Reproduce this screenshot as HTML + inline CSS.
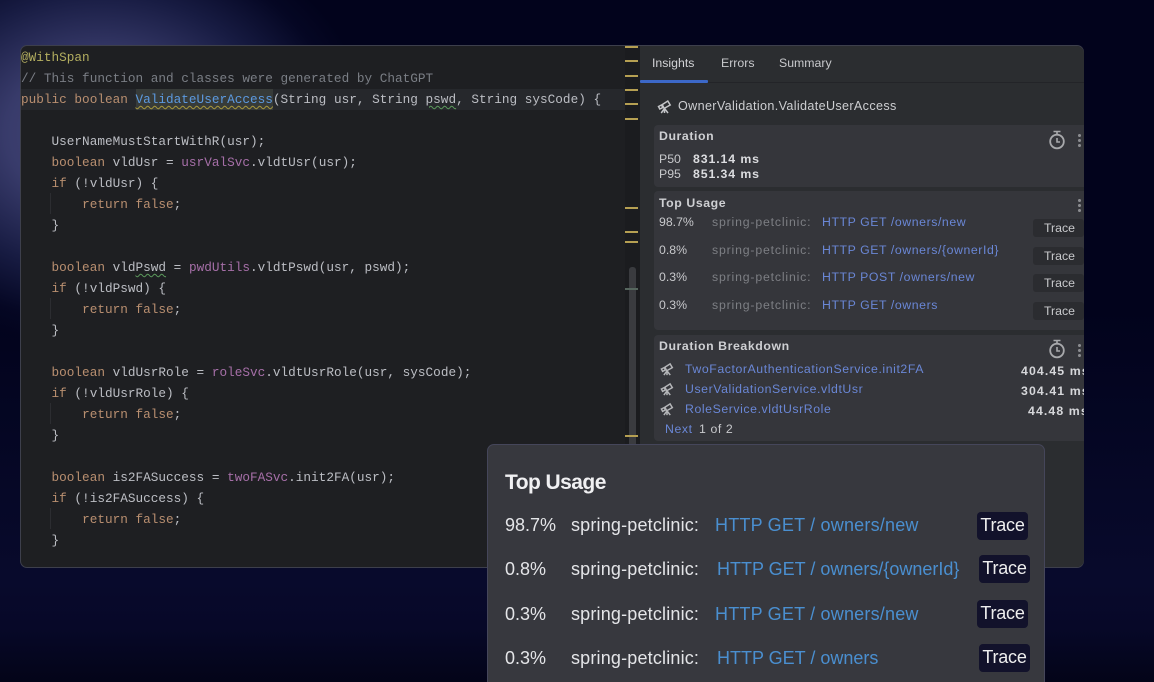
<!DOCTYPE html>
<html><head><meta charset="utf-8"><style>
html,body{margin:0;padding:0;width:1154px;height:682px;overflow:hidden;background:#02031a}
#root{position:absolute;left:0;top:0;width:1154px;height:682px;overflow:hidden}
#all{position:absolute;left:0;top:0;width:1154px;height:682px;overflow:hidden;filter:blur(.3px)}
#bg{position:absolute;left:0;top:0;width:1154px;height:682px;overflow:hidden;background:
radial-gradient(ellipse 270px 215px at 100px 133px,rgba(72,74,125,1) 0%,rgba(62,65,115,.9) 35%,rgba(38,44,92,.6) 65%,rgba(14,18,58,.25) 88%,rgba(5,7,38,0) 100%),
linear-gradient(180deg,#02031c 0%,#02031c 45%,#080a2c 85%,#070828 92%,#030418 100%)}
.t{position:absolute;white-space:pre;line-height:1}
#win{position:absolute;left:20px;top:45px;width:1064px;height:523px;border:1px solid #3d3f4c;border-radius:7px;overflow:hidden;background:#1e1f22;box-sizing:border-box}
#code{position:absolute;left:21px;top:0;font:12.72px/21px "Liberation Mono",monospace;color:#bcbec4;font-weight:400}
.cl{position:absolute;left:0;white-space:pre;height:21px;line-height:21px}
.k{color:#b98f70}.p{color:#a66fa8}.a{color:#b3ae60}.c{color:#7a7e85}.m{color:#56a8f5}
.mk{position:absolute;left:625px;width:13px;height:2px;background:#b59f52}
.s{font-family:"Liberation Sans",sans-serif;font-size:12.3px;color:#c8c9cc}
.b{font-weight:700;color:#cfd0d3;letter-spacing:.58px}
.g{color:#7d7f84;letter-spacing:.82px}.l{color:#6a87d6;letter-spacing:.57px}
.card{position:absolute;left:654px;width:430px;background:#35363b;border-radius:4px 0 0 4px}
.tr{position:absolute;left:1033px;width:51px;height:18px;background:#2b2c30;border-radius:3px;font:12.3px/18px "Liberation Sans",sans-serif;color:#c8c9cc;text-indent:11px}
.dots{position:absolute;left:1078px;width:3px;height:13px;background:radial-gradient(circle at 1.5px 1.5px,#8b8c90 1.4px,transparent 1.6px) 0 0/3px 5px}
#pop{position:absolute;left:487px;top:444px;width:558px;height:260px;background:#37383e;border:1.5px solid #45465a;border-radius:7px;box-sizing:border-box}
.q{font-family:"Liberation Sans",sans-serif;font-size:18px;color:#e4e5e8}
.sp{letter-spacing:.18px}
.u{color:#4a8fd0}
.btn{position:absolute;height:28px;background:#12122b;border-radius:4px;font:18px/27px "Liberation Sans",sans-serif;color:#eeeeee;text-align:center;letter-spacing:-.2px}
</style></head><body>
<div id="root"><div id="all">
<div id="bg"></div>
<div id="win"></div>
<div style="position:absolute;left:21px;top:89px;width:604px;height:21px;background:#26282c"></div>
<div style="position:absolute;left:136px;top:89px;width:137px;height:21px;background:#373b39"></div>
<div style="position:absolute;left:625px;top:46px;width:15px;height:521px;background:#1b1c1f"></div>
<div style="position:absolute;left:640px;top:46px;width:444px;height:521px;background:#2b2d30;border-radius:0 7px 7px 0"></div>
<div style="position:absolute;left:640px;top:82px;width:444px;height:1px;background:#232428"></div>
<div style="position:absolute;left:640px;top:80px;width:68px;height:3px;background:#3c68c8;border-radius:1px"></div>
<div style="position:absolute;left:629px;top:267px;width:7px;height:300px;background:#3a3b3f;border-radius:3px 3px 0 0"></div>

<div id="code">
<div class="cl" style="top:47px"><span class="a">@WithSpan</span></div>
<div class="cl" style="top:68px"><span class="c">// This function and classes were generated by ChatGPT</span></div>
<div class="cl" style="top:89px"><span class="k">public boolean </span><span class="m" style="color:#5c9ae0;text-decoration:underline wavy #a8983c 1px;text-underline-offset:2px">ValidateUserAccess</span>(String usr, String <span style="text-decoration:underline wavy #5c9a5c 1px;text-underline-offset:2px">pswd</span>, String sysCode) {</div>
<div class="cl" style="top:131px">    UserNameMustStartWithR(usr);</div>
<div class="cl" style="top:152px">    <span class="k">boolean</span> vldUsr = <span class="p">usrValSvc</span>.vldtUsr(usr);</div>
<div class="cl" style="top:173px">    <span class="k">if</span> (!vldUsr) {</div>
<div class="cl" style="top:194px">        <span class="k">return false</span>;</div>
<div class="cl" style="top:215px">    }</div>
<div class="cl" style="top:257px">    <span class="k">boolean</span> vld<span style="text-decoration:underline wavy #5c9a5c 1px;text-underline-offset:2px">Pswd</span> = <span class="p">pwdUtils</span>.vldtPswd(usr, pswd);</div>
<div class="cl" style="top:278px">    <span class="k">if</span> (!vldPswd) {</div>
<div class="cl" style="top:299px">        <span class="k">return false</span>;</div>
<div class="cl" style="top:320px">    }</div>
<div class="cl" style="top:362px">    <span class="k">boolean</span> vldUsrRole = <span class="p">roleSvc</span>.vldtUsrRole(usr, sysCode);</div>
<div class="cl" style="top:383px">    <span class="k">if</span> (!vldUsrRole) {</div>
<div class="cl" style="top:404px">        <span class="k">return false</span>;</div>
<div class="cl" style="top:425px">    }</div>
<div class="cl" style="top:467px">    <span class="k">boolean</span> is2FASuccess = <span class="p">twoFASvc</span>.init2FA(usr);</div>
<div class="cl" style="top:488px">    <span class="k">if</span> (!is2FASuccess) {</div>
<div class="cl" style="top:509px">        <span class="k">return false</span>;</div>
<div class="cl" style="top:530px">    }</div>
</div>
<div style="position:absolute;left:50px;top:193px;width:1px;height:21px;background:#2c2d31"></div>
<div style="position:absolute;left:50px;top:298px;width:1px;height:21px;background:#2c2d31"></div>
<div style="position:absolute;left:50px;top:403px;width:1px;height:21px;background:#2c2d31"></div>
<div style="position:absolute;left:50px;top:508px;width:1px;height:21px;background:#2c2d31"></div>

<div class="mk" style="top:46px"></div><div class="mk" style="top:60px"></div><div class="mk" style="top:75px"></div><div class="mk" style="top:89px"></div><div class="mk" style="top:103px"></div><div class="mk" style="top:118px"></div><div class="mk" style="top:207px"></div><div class="mk" style="top:231px"></div><div class="mk" style="top:241px"></div><div class="mk" style="top:435px"></div>
<div class="mk" style="top:288px;background:#56665e"></div>

<div class="t s" style="left:652px;top:57px;color:#d2d3d6">Insights</div>
<div class="t s" style="left:721px;top:57px;color:#c8c9cc">Errors</div>
<div class="t s" style="left:779px;top:57px;color:#c8c9cc">Summary</div>

<svg style="position:absolute;left:657px;top:99px" width="15" height="15" viewBox="0 0 15 15" fill="none" stroke="#c4c5c8" stroke-width="1.5"><path d="M1.5 7.5l3-1.5 1.3 2.5-3 1.5zM5.2 5.6l5.6-3.6 2.4 4-6 3.4zM7.5 9.5L4.2 14M7.5 9.5V14M7.5 9.5L11 14"/></svg>
<div class="t s" style="left:678px;top:100px;font-size:12.6px;color:#cdced1;letter-spacing:.35px">OwnerValidation.ValidateUserAccess</div>

<div class="card" style="top:125px;height:62px"></div>
<div class="t s b" style="left:659px;top:130px">Duration</div>
<div class="t s" style="left:659px;top:153px">P50</div><div class="t s b" style="left:693px;top:153px;color:#dcdde0;letter-spacing:.9px">831.14 ms</div>
<div class="t s" style="left:659px;top:168px">P95</div><div class="t s b" style="left:693px;top:168px;color:#dcdde0;letter-spacing:.9px">851.34 ms</div>
<svg style="position:absolute;left:1048px;top:130px" width="18" height="20" viewBox="0 0 18 20" fill="none" stroke="#a8a9ac" stroke-width="1.8"><circle cx="9" cy="11.5" r="6.8"/><path d="M5.5 1.5h7M9 2v3M9 8v4h3" stroke-width="1.6"/></svg>
<div class="dots" style="top:134px"></div>

<div class="card" style="top:191px;height:139px"></div>
<div class="t s b" style="left:659px;top:197px">Top Usage</div>
<div class="dots" style="top:199px"></div>
<div class="t s" style="left:659px;top:216px">98.7%</div><div class="t s g" style="left:712px;top:216px">spring-petclinic:</div><div class="t s l" style="left:822px;top:216px">HTTP GET /owners/new</div>
<div class="t s" style="left:659px;top:244px">0.8%</div><div class="t s g" style="left:712px;top:244px">spring-petclinic:</div><div class="t s l" style="left:822px;top:244px">HTTP GET /owners/{ownerId}</div>
<div class="t s" style="left:659px;top:271px">0.3%</div><div class="t s g" style="left:712px;top:271px">spring-petclinic:</div><div class="t s l" style="left:822px;top:271px">HTTP POST /owners/new</div>
<div class="t s" style="left:659px;top:299px">0.3%</div><div class="t s g" style="left:712px;top:299px">spring-petclinic:</div><div class="t s l" style="left:822px;top:299px">HTTP GET /owners</div>
<div class="tr" style="top:219px">Trace</div><div class="tr" style="top:247px">Trace</div><div class="tr" style="top:274px">Trace</div><div class="tr" style="top:302px">Trace</div>

<div class="card" style="top:335px;height:106px"></div>
<div class="t s b" style="left:659px;top:340px">Duration Breakdown</div>
<svg style="position:absolute;left:1048px;top:339px" width="18" height="20" viewBox="0 0 18 20" fill="none" stroke="#a8a9ac" stroke-width="1.8"><circle cx="9" cy="11.5" r="6.8"/><path d="M5.5 1.5h7M9 2v3M9 8v4h3" stroke-width="1.6"/></svg>
<div class="dots" style="top:344px"></div>
<svg style="position:absolute;left:660px;top:362px" width="14" height="14" viewBox="0 0 15 15" fill="none" stroke="#b4b5b8" stroke-width="1.6"><path d="M1.5 7.5l3-1.5 1.3 2.5-3 1.5zM5.2 5.6l5.6-3.6 2.4 4-6 3.4zM7.5 9.5L4.2 14M7.5 9.5V14M7.5 9.5L11 14"/></svg>
<svg style="position:absolute;left:660px;top:382px" width="14" height="14" viewBox="0 0 15 15" fill="none" stroke="#b4b5b8" stroke-width="1.6"><path d="M1.5 7.5l3-1.5 1.3 2.5-3 1.5zM5.2 5.6l5.6-3.6 2.4 4-6 3.4zM7.5 9.5L4.2 14M7.5 9.5V14M7.5 9.5L11 14"/></svg>
<svg style="position:absolute;left:660px;top:402px" width="14" height="14" viewBox="0 0 15 15" fill="none" stroke="#b4b5b8" stroke-width="1.6"><path d="M1.5 7.5l3-1.5 1.3 2.5-3 1.5zM5.2 5.6l5.6-3.6 2.4 4-6 3.4zM7.5 9.5L4.2 14M7.5 9.5V14M7.5 9.5L11 14"/></svg>
<div class="t s l" style="left:685px;top:363px">TwoFactorAuthenticationService.init2FA</div>
<div class="t s l" style="left:685px;top:383px">UserValidationService.vldtUsr</div>
<div class="t s l" style="left:685px;top:403px">RoleService.vldtUsrRole</div>
<div style="position:absolute;left:1000px;top:360px;width:84px;height:60px;overflow:hidden">
<div class="t s b" style="left:21px;top:5px;color:#d6d7da;letter-spacing:1.1px">404.45 ms</div>
<div class="t s b" style="left:21px;top:25px;color:#d6d7da;letter-spacing:1.1px">304.41 ms</div>
<div class="t s b" style="left:28px;top:45px;color:#d6d7da;letter-spacing:1.1px">44.48 ms</div>
</div>
<div class="t s l" style="left:665px;top:423px">Next</div><div class="t s" style="left:699px;top:423px;letter-spacing:.6px">1 of 2</div>

<div id="pop"></div>
<div class="t q" style="left:505px;top:472px;font-size:21px;font-weight:700;color:#f0f0f2;letter-spacing:-.55px">Top Usage</div>
<div class="t q" style="left:505px;top:516px">98.7%</div><div class="t q sp" style="left:571px;top:516px">spring-petclinic:</div><div class="t q u" style="left:715px;top:516px;letter-spacing:.2px">HTTP GET / owners/new</div>
<div class="t q" style="left:505px;top:560px">0.8%</div><div class="t q sp" style="left:571px;top:560px">spring-petclinic:</div><div class="t q u" style="left:717px;top:560px">HTTP GET / owners/{ownerId}</div>
<div class="t q" style="left:505px;top:605px">0.3%</div><div class="t q sp" style="left:571px;top:605px">spring-petclinic:</div><div class="t q u" style="left:715px;top:605px;letter-spacing:.2px">HTTP GET / owners/new</div>
<div class="t q" style="left:505px;top:649px">0.3%</div><div class="t q sp" style="left:571px;top:649px">spring-petclinic:</div><div class="t q u" style="left:717px;top:649px">HTTP GET / owners</div>
<div class="btn" style="left:977px;top:512px;width:51px">Trace</div>
<div class="btn" style="left:979px;top:555px;width:51px">Trace</div>
<div class="btn" style="left:977px;top:600px;width:51px">Trace</div>
<div class="btn" style="left:979px;top:644px;width:51px">Trace</div>
</div></div>
</body></html>
